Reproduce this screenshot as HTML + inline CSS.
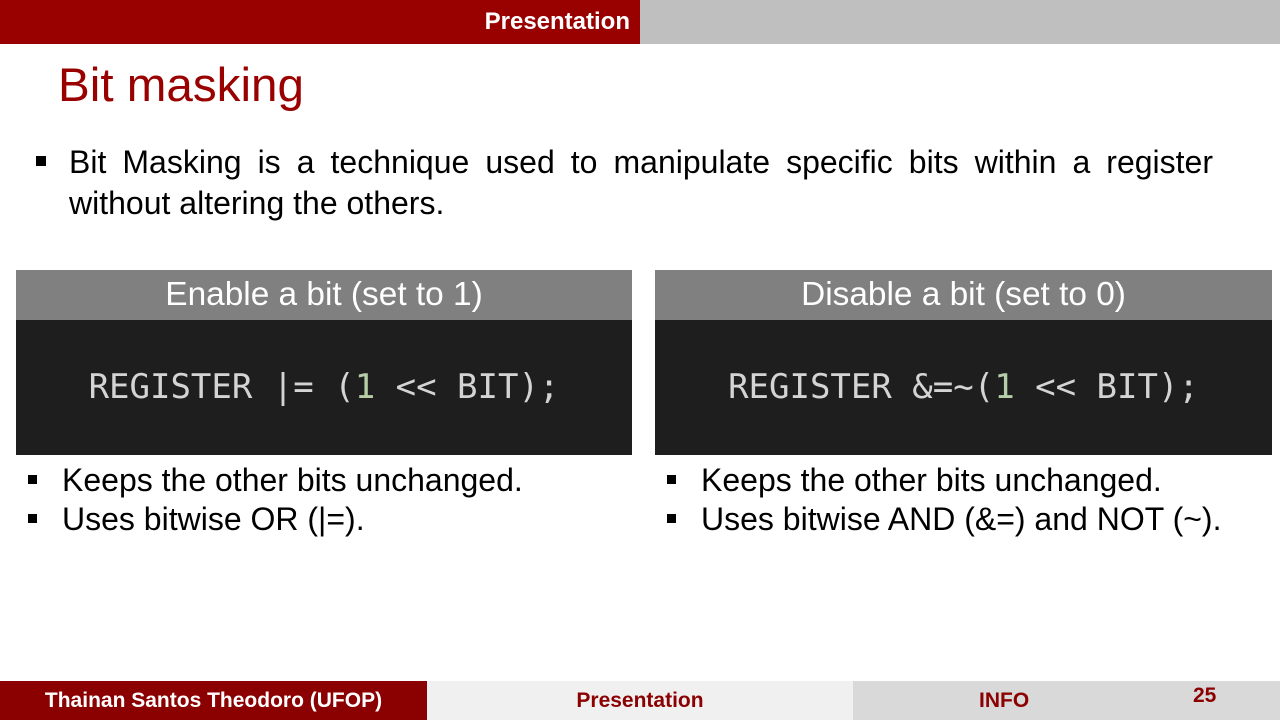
<!DOCTYPE html>
<html><head><meta charset="utf-8"><style>
*{margin:0;padding:0;box-sizing:border-box}
body{width:1280px;height:720px;position:relative;background:#fff;font-family:"Liberation Sans",Arial,sans-serif;overflow:hidden}
.a{position:absolute}
.hd{background:#808080;color:#fff;font-size:33.4px;text-align:center;line-height:50px;height:50px}
.cd{background:#1e1e1e;color:#d4d4d4;font-family:"DejaVu Sans Mono","Liberation Mono",monospace;font-size:34px;text-align:center;line-height:135px;height:135px}
.g{color:#b5cea8}
.li{font-size:32px;color:#000;line-height:39px;white-space:nowrap}
.sq{display:inline-block;width:9px;height:9px;background:#000;vertical-align:middle;margin-right:25px;position:relative;top:-3px}
</style></head><body>
<div class="a" style="left:0;top:0;width:640px;height:44px;background:#990000;color:#fff;font-weight:bold;font-size:24px;text-align:right;padding-right:10px;line-height:44px">Presentation</div>
<div class="a" style="left:640px;top:0;width:640px;height:44px;background:#bfbfbf"></div>
<div class="a" style="left:58px;top:58px;font-size:47.6px;color:#990000;line-height:56px">Bit masking</div>
<div class="a" style="left:36px;top:156px;width:10px;height:10px;background:#000"></div>
<div class="a" style="left:69px;top:142px;width:1144px;font-size:32px;line-height:41px;text-align:justify;text-align-last:left">Bit Masking is a technique used to manipulate specific bits within a register without altering the others.</div>
<div class="a hd" style="left:16px;top:270px;width:616px">Enable a bit (set to 1)</div>
<div class="a cd" style="left:16px;top:320px;width:616px">REGISTER |= (<span class="g">1</span> &lt;&lt; BIT);</div>
<div class="a hd" style="left:655px;top:270px;width:617px">Disable a bit (set to 0)</div>
<div class="a cd" style="left:655px;top:320px;width:617px">REGISTER &amp;=~(<span class="g">1</span> &lt;&lt; BIT);</div>
<div class="a li" style="left:28px;top:461px"><span class="sq"></span>Keeps the other bits unchanged.<br><span class="sq"></span>Uses bitwise OR (|=).</div>
<div class="a li" style="left:667px;top:461px"><span class="sq"></span>Keeps the other bits unchanged.<br><span class="sq"></span>Uses bitwise AND (&amp;=) and NOT (~).</div>
<div class="a" style="left:0;top:681px;width:427px;height:39px;background:#8b0000;color:#fff;font-weight:bold;font-size:21px;text-align:center;line-height:40px">Thainan Santos Theodoro (UFOP)</div>
<div class="a" style="left:427px;top:681px;width:426px;height:39px;background:#f0f0f0;color:#8b0000;font-weight:bold;font-size:21px;text-align:center;line-height:40px">Presentation</div>
<div class="a" style="left:853px;top:681px;width:427px;height:39px;background:#d9d9d9;color:#8b0000;font-weight:bold;font-size:21px;line-height:40px"><span class="a" style="left:126px">INFO</span><span class="a" style="left:340px;top:-5px">25</span></div>
</body></html>
